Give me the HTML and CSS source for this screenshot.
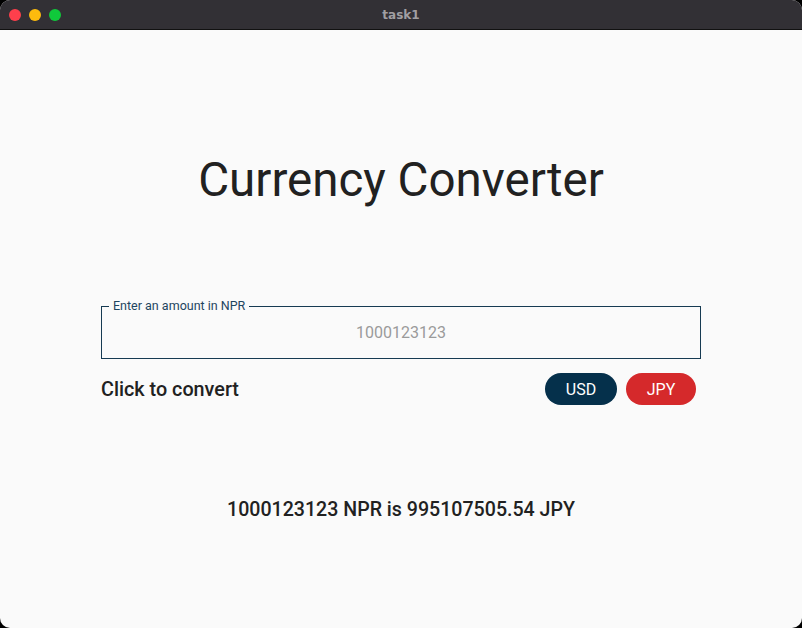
FILE: index.html
```html
<!DOCTYPE html>
<html>
<head>
<meta charset="utf-8">
<link rel="stylesheet" href="styles.css">
</head>
<body>
<div class="window">
  <div class="titlebar">
    <div class="lights">
      <span class="light red"></span>
      <span class="light yellow"></span>
      <span class="light green"></span>
    </div>
    <div class="title">task1</div>
  </div>
  <div class="content">
    <h1 class="heading">Currency Converter</h1>
    <fieldset class="field">
      <legend class="field-label">Enter an amount in NPR</legend>
      <div class="field-value">1000123123</div>
    </fieldset>
    <div class="actions">
      <span class="prompt">Click to convert</span>
      <div class="buttons">
        <button class="btn btn-usd">USD</button>
        <button class="btn btn-jpy">JPY</button>
      </div>
    </div>
    <div class="result">1000123123 NPR is 995107505.54 JPY</div>
  </div>
</div>
</body>
</html>
```
FILE: styles.css
```css
html, body {
  margin: 0;
  padding: 0;
  background: #000;
  width: 802px;
  height: 628px;
  overflow: hidden;
}
.window {
  width: 802px;
  height: 628px;
  border-radius: 10px;
  overflow: hidden;
  background: #fafafa;
  display: flex;
  flex-direction: column;
  font-family: Roboto, "Liberation Sans", sans-serif;
}
.titlebar {
  height: 29px;
  background: #323035;
  border-bottom: 1px solid #111;
  position: relative;
  display: flex;
  align-items: center;
  justify-content: center;
  flex-shrink: 0;
}
.lights {
  position: absolute;
  left: 9px;
  top: 9px;
  display: flex;
  gap: 8px;
}
.light {
  width: 12px;
  height: 12px;
  border-radius: 50%;
}
.red { background: #fe3f4c; }
.yellow { background: #fdbb0d; }
.green { background: #10c93b; }
.title {
  color: #a09fa3;
  font-family: "DejaVu Sans", sans-serif;
  font-weight: bold;
  font-size: 12px;
}
.content {
  flex: 1;
  display: flex;
  flex-direction: column;
  padding: 0 101px;
}
.heading {
  margin: 121px 0 0;
  text-align: center;
  font-weight: 400;
  font-size: 47.5px;
  line-height: 58px;
  color: #212121;
}
.field {
  margin: 91px 0 0;
  padding: 0;
  border: 1px solid #163a52;
  border-radius: 0;
  box-sizing: border-box;
  height: 59px;
  display: block;
}
.field-label {
  margin-left: 7px;
  padding: 0 4px;
  font-size: 12.5px;
  color: #1e4560;
  line-height: 12px;
}
.field-value {
  text-align: center;
  font-size: 16px;
  color: #9a9a9a;
  line-height: 20px;
  margin-top: 11px;
}
.actions {
  margin-top: 14px;
  display: flex;
  align-items: center;
  justify-content: space-between;
}
.prompt {
  font-size: 19.8px;
  font-weight: 500;
  color: #212121;
}
.buttons {
  display: flex;
  gap: 9px;
  margin-right: 5px;
}
.btn {
  border: none;
  height: 32px;
  border-radius: 16px;
  color: #fff;
  font-family: Roboto, "Liberation Sans", sans-serif;
  font-size: 16px;
  padding: 0;
}
.btn-usd {
  width: 72px;
  background: #05304b;
}
.btn-jpy {
  width: 70px;
  background: #d5292b;
}
.result {
  margin-top: 93px;
  text-align: center;
  font-size: 19.6px;
  font-weight: 500;
  color: #212121;
}
```
